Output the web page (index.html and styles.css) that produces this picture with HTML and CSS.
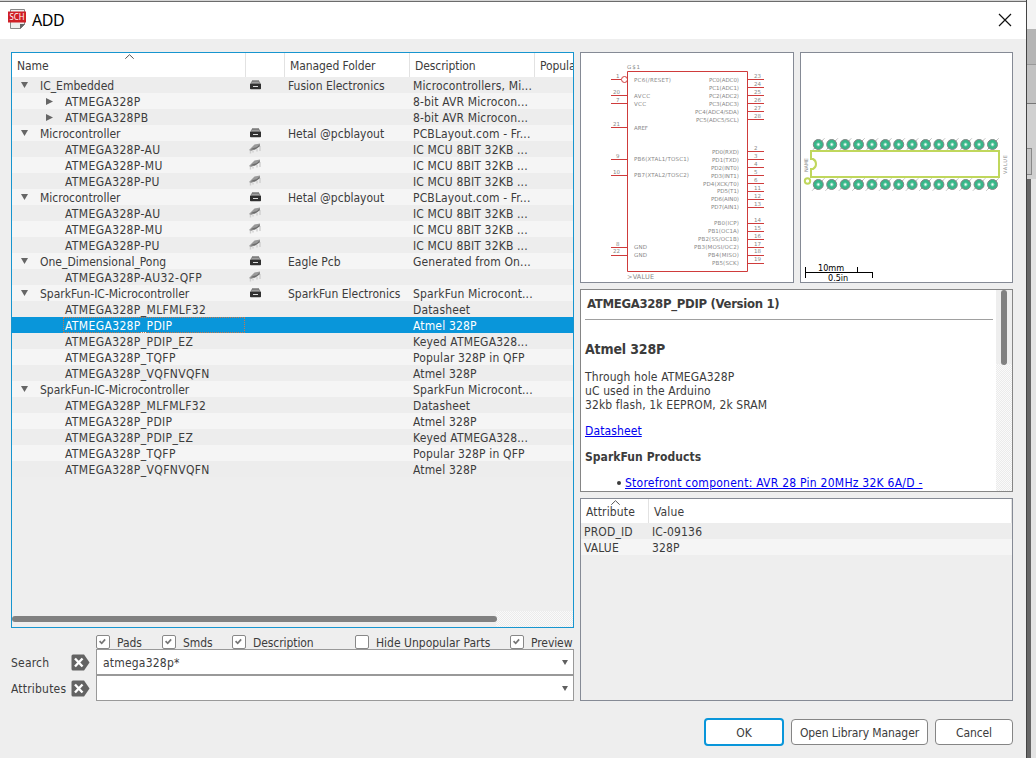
FILE: index.html
```html
<!DOCTYPE html>
<html lang="en">
<head>
<meta charset="utf-8">
<title>ADD</title>
<link rel="stylesheet" href="styles.css">
</head>
<body>
<svg class="defs" width="0" height="0">
  <symbol id="lib" viewBox="0 0 11 10"><path d="M2.500 0h6L11 4H0z" fill="#777"/><path d="M2.500 .7h6M1.500 2.500h8" stroke="#aaa" stroke-width=".8"/><path d="M0 4h11v4.500q0 .8-.8.8H.8Q0 9.300 0 8.500z" fill="#303030"/><path d="M3 6.500h5" stroke="#ddd"/></symbol>
  <symbol id="chip" viewBox="0 0 12 11"><path d="M1.500 7v3.500M4 8v1.500M8 5.500v3M11 3v5" stroke="#cfcfcf" stroke-width="1.400"/><path d="M0 7 5.500 1.500 11 .5 11 3 6 6.500 2 8z" fill="#9a9a9a"/><path d="M3 5.500 8 4 10.500 1.500v2L6 6.500H2z" fill="#6c6c6c"/></symbol>
  <symbol id="tick" viewBox="0 0 14 14"><path d="m3 6 2.500 2.500L9.500 4" fill="none" stroke="#777" stroke-width="2"/></symbol>
  <symbol id="clear" viewBox="0 0 19 17"><path d="M2 .5h11l5.500 8-5.500 8H2Q.5 16.500.5 15V2Q.5.5 2 .5z" fill="#636363"/><path d="m4 4.500 7.500 8M11.500 4.500 4 12.500" stroke="#fff" stroke-width="2.400"/></symbol>
  <symbol id="caret" viewBox="0 0 9 5"><path d="M.3 4.700 4.500.7l4.200 4" fill="none" stroke="#555"/></symbol>
  <g id="pad"><path d="M-6 6 6-6" stroke="#808080" stroke-width=".8" stroke-dasharray="1.500 .7"/><circle r="5" fill="#35b889" stroke="#858585"/><path d="M-4 4 4-4M-3.500-3.500l7 7" stroke="#5f9d86" stroke-width=".8" stroke-dasharray="1.300 1"/><circle r="1.900" fill="#7fd6b6"/><circle r=".9" fill="#fff"/></g>
</svg>
<div class="window">
  <header class="titlebar">
    <svg class="logo" width="18" height="21" viewBox="0 0 18 21"><path d="M2.500.5h14v15l-4 4h-10z" fill="#eee" stroke="#888"/><path d="M17 15h-5v5z" fill="#666"/><path d="M0 2.500h18v11H0z" fill="#cf2027"/><text x="1.500" y="11" textLength="15" lengthAdjust="spacingAndGlyphs" class="logo-text">SCH</text></svg>
    <h1>ADD</h1>
    <svg class="close" width="14" height="14" viewBox="0 0 14 14"><path d="m1 1 12 12M13 1 1 13" stroke="#111" stroke-width="1.200"/></svg>
  </header>
  <main class="content">
    <section class="left">
      <div class="tree">
        <div class="thead"><span>Name</span><span></span><span>Managed Folder</span><span>Description</span><span>Popula</span><svg class="sort"><use href="#caret"/></svg></div>
        <div class="row"><b class="p open">IC_Embedded</b><i><svg class="lib"><use href="#lib"/></svg></i><span>Fusion Electronics</span><span>Microcontrollers, Mi...</span></div>
        <div class="row"><b class="c shut">ATMEGA328P</b><i></i><span></span><span>8-bit AVR Microcon...</span></div>
        <div class="row"><b class="c shut">ATMEGA328PB</b><i></i><span></span><span>8-bit AVR Microcon...</span></div>
        <div class="row"><b class="p open">Microcontroller</b><i><svg class="lib"><use href="#lib"/></svg></i><span>Hetal @pcblayout</span><span>PCBLayout.com - Fr...</span></div>
        <div class="row"><b class="c">ATMEGA328P-AU</b><i><svg class="chip"><use href="#chip"/></svg></i><span></span><span>IC MCU 8BIT 32KB ...</span></div>
        <div class="row"><b class="c">ATMEGA328P-MU</b><i><svg class="chip"><use href="#chip"/></svg></i><span></span><span>IC MCU 8BIT 32KB ...</span></div>
        <div class="row"><b class="c">ATMEGA328P-PU</b><i><svg class="chip"><use href="#chip"/></svg></i><span></span><span>IC MCU 8BIT 32KB ...</span></div>
        <div class="row"><b class="p open">Microcontroller</b><i><svg class="lib"><use href="#lib"/></svg></i><span>Hetal @pcblayout</span><span>PCBLayout.com - Fr...</span></div>
        <div class="row"><b class="c">ATMEGA328P-AU</b><i><svg class="chip"><use href="#chip"/></svg></i><span></span><span>IC MCU 8BIT 32KB ...</span></div>
        <div class="row"><b class="c">ATMEGA328P-MU</b><i><svg class="chip"><use href="#chip"/></svg></i><span></span><span>IC MCU 8BIT 32KB ...</span></div>
        <div class="row"><b class="c">ATMEGA328P-PU</b><i><svg class="chip"><use href="#chip"/></svg></i><span></span><span>IC MCU 8BIT 32KB ...</span></div>
        <div class="row"><b class="p open">One_Dimensional_Pong</b><i><svg class="lib"><use href="#lib"/></svg></i><span>Eagle Pcb</span><span>Generated from On...</span></div>
        <div class="row"><b class="c">ATMEGA328P-AU32-QFP</b><i><svg class="chip"><use href="#chip"/></svg></i><span></span><span></span></div>
        <div class="row"><b class="p open">SparkFun-IC-Microcontroller</b><i><svg class="lib"><use href="#lib"/></svg></i><span>SparkFun Electronics</span><span>SparkFun Microcont...</span></div>
        <div class="row"><b class="c">ATMEGA328P_MLFMLF32</b><i></i><span></span><span>Datasheet</span></div>
        <div class="row selected"><b class="c">ATMEGA328P_PDIP</b><i></i><span></span><span>Atmel 328P</span></div>
        <div class="row"><b class="c">ATMEGA328P_PDIP_EZ</b><i></i><span></span><span>Keyed ATMEGA328...</span></div>
        <div class="row"><b class="c">ATMEGA328P_TQFP</b><i></i><span></span><span>Popular 328P in QFP</span></div>
        <div class="row"><b class="c">ATMEGA328P_VQFNVQFN</b><i></i><span></span><span>Atmel 328P</span></div>
        <div class="row"><b class="p open">SparkFun-IC-Microcontroller</b><i></i><span></span><span>SparkFun Microcont...</span></div>
        <div class="row"><b class="c">ATMEGA328P_MLFMLF32</b><i></i><span></span><span>Datasheet</span></div>
        <div class="row"><b class="c">ATMEGA328P_PDIP</b><i></i><span></span><span>Atmel 328P</span></div>
        <div class="row"><b class="c">ATMEGA328P_PDIP_EZ</b><i></i><span></span><span>Keyed ATMEGA328...</span></div>
        <div class="row"><b class="c">ATMEGA328P_TQFP</b><i></i><span></span><span>Popular 328P in QFP</span></div>
        <div class="row"><b class="c">ATMEGA328P_VQFNVQFN</b><i></i><span></span><span>Atmel 328P</span></div>
        <div class="hscroll"><div class="hthumb"></div></div>
      </div>
      <div class="checks">
        <label class="w66"><svg class="box"><use href="#tick"/></svg>Pads</label>
        <label class="w70"><svg class="box"><use href="#tick"/></svg>Smds</label>
        <label class="w123"><svg class="box"><use href="#tick"/></svg>Description</label>
        <label class="w155"><svg class="box"></svg>Hide Unpopular Parts</label>
        <label><svg class="box"><use href="#tick"/></svg>Preview</label>
      </div>
      <div class="field"><span>Search</span><svg class="clear"><use href="#clear"/></svg><div class="combo">atmega328p*</div></div>
      <div class="field"><span>Attributes</span><svg class="clear"><use href="#clear"/></svg><div class="combo"></div></div>
    </section>
    <section class="right">
      <div class="previews">
        <svg class="preview" viewBox="581 53 212 229">
          <g fill="none" stroke="#cf3b3b">
            <path d="M627.5 71.500h120v200h-120z"/>
            <path d="M748 79.500h16m-16 8h16m-16 8h16m-16 8h16m-16 8h16m-16 8h16M748 151.500h16m-16 8h16m-16 8h16m-16 8h16m-16 8h16m-16 8h16m-16 8h16m-16 8h16M748 223.500h16m-16 8h16m-16 8h16m-16 8h16m-16 8h16m-16 8h16"/>
            <path d="M611 79.500h10M611 95.500h16m-16 8h16m-16 24h16m-16 32h16m-16 16h16m-16 72h16m-16 8h16"/>
            <circle cx="624.5" cy="79.500" r="3"/>
          </g>
          <g class="pin">
            <text x="627" y="68.500" textLength="13">G$1</text>
            <text x="627" y="279" textLength="27" class="wide">&gt;VALUE</text>
            <text x="634" y="82" textLength="37">PC6(/RESET)</text>
            <text x="634" y="98" textLength="16">AVCC</text>
            <text x="634" y="106" textLength="12">VCC</text>
            <text x="634" y="130" textLength="14">AREF</text>
            <text x="634" y="161" textLength="55">PB6(XTAL1/TOSC1)</text>
            <text x="634" y="177" textLength="55">PB7(XTAL2/TOSC2)</text>
            <text x="634" y="249" textLength="13">GND</text>
            <text x="634" y="257" textLength="13">GND</text>
            <text x="709" y="82" textLength="30">PC0(ADC0)</text>
            <text x="709" y="90" textLength="30">PC1(ADC1)</text>
            <text x="709" y="98" textLength="30">PC2(ADC2)</text>
            <text x="709" y="106" textLength="30">PC3(ADC3)</text>
            <text x="695" y="114" textLength="44">PC4(ADC4/SDA)</text>
            <text x="696" y="122" textLength="43">PC5(ADC5/SCL)</text>
            <text x="712" y="154" textLength="27">PD0(RXD)</text>
            <text x="712" y="162" textLength="27">PD1(TXD)</text>
            <text x="711" y="170" textLength="28">PD2(INT0)</text>
            <text x="711" y="178" textLength="28">PD3(INT1)</text>
            <text x="703" y="186" textLength="36">PD4(XCK/T0)</text>
            <text x="717" y="193" textLength="22">PD5(T1)</text>
            <text x="711" y="201" textLength="28">PD6(AIN0)</text>
            <text x="711" y="209" textLength="28">PD7(AIN1)</text>
            <text x="714" y="225" textLength="25">PB0(ICP)</text>
            <text x="708" y="233" textLength="31">PB1(OC1A)</text>
            <text x="698" y="241" textLength="41">PB2(SS/OC1B)</text>
            <text x="694" y="249" textLength="45">PB3(MOSI/OC2)</text>
            <text x="708" y="257" textLength="31">PB4(MISO)</text>
            <text x="712" y="265" textLength="27">PB5(SCK)</text>
            <text x="754" y="78">23</text><text x="754" y="86">24</text><text x="754" y="94">25</text><text x="754" y="102">26</text><text x="754" y="110">27</text><text x="754" y="118">28</text>
            <text x="754" y="150">2</text><text x="754" y="158">3</text><text x="754" y="166">4</text><text x="754" y="174">5</text><text x="754" y="182">6</text><text x="754" y="190">11</text><text x="754" y="198">12</text><text x="754" y="206">13</text>
            <text x="754" y="222">14</text><text x="754" y="230">15</text><text x="754" y="238">16</text><text x="754" y="246">17</text><text x="754" y="253">18</text><text x="754" y="261">19</text>
            <text x="616" y="78">1</text><text x="613" y="94">20</text><text x="616" y="102">7</text><text x="613" y="126">21</text><text x="616" y="158">9</text><text x="613" y="174">10</text><text x="616" y="246">8</text><text x="613" y="253">22</text>
          </g>
        </svg>
        <svg class="preview" viewBox="801 53 211 229">
          <g id="pads" transform="translate(818.3 144.500)"><use href="#pad"/><use href="#pad" x="13.400"/><use href="#pad" x="26.800"/><use href="#pad" x="40.200"/><use href="#pad" x="53.600"/><use href="#pad" x="67"/><use href="#pad" x="80.400"/><use href="#pad" x="93.800"/><use href="#pad" x="107.200"/><use href="#pad" x="120.600"/><use href="#pad" x="134"/><use href="#pad" x="147.400"/><use href="#pad" x="160.800"/><use href="#pad" x="174.200"/></g>
          <use href="#pads" y="40"/>
          <g fill="none" stroke="#c0d75c" stroke-width="2"><path d="M811 159V151H999v26H811v-8h2q3-1.500 3-5t-3-5z"/><circle cx="807.500" cy="181" r="2.700"/></g>
          <path d="M811 160v8" stroke="#fff" stroke-width="2.200"/>
          <g class="pin small"><text transform="translate(808 172) rotate(-90)" textLength="14">NAME</text><text transform="translate(1006.500 174) rotate(-90)" textLength="19">VALUE</text></g>
          <path d="M805.500 267v11M805 272.500h68M857.500 267v5M872.500 272v6" stroke="#000" fill="none"/>
          <g class="scale"><text x="818" y="270.800">10mm</text><text x="828" y="281.300">0.5in</text></g>
        </svg>
      </div>
      <div class="details">
        <div class="doc">
          <h2>ATMEGA328P_PDIP (Version 1)</h2>
          <h3>Atmel 328P</h3>
          <p>Through hole ATMEGA328P<br>uC used in the Arduino<br>32kb flash, 1k EEPROM, 2k SRAM</p>
          <p><a>Datasheet</a></p>
          <h4>SparkFun Products</h4>
          <ul><li><a class="store">Storefront component: AVR 28 Pin 20MHz 32K 6A/D -</a></li></ul>
        </div>
        <div class="vscroll"><div class="vtrack"><div class="vthumb"></div></div></div>
      </div>
      <div class="attrs">
        <div class="ahead"><span>Attribute</span><span>Value</span><svg class="sort"><use href="#caret"/></svg></div>
        <div class="arow"><span>PROD_ID</span><span>IC-09136</span></div>
        <div class="arow alt"><span>VALUE</span><span>328P</span></div>
      </div>
    </section>
  </main>
  <footer class="buttons"><button class="ok">OK</button><button class="manager">Open Library Manager</button><button class="cancel">Cancel</button></footer>
</div>
<aside class="backdrop"><div class="b1"></div><div class="b2"></div><div class="b3"></div><div class="b4"><div></div></div><div class="b5"></div></aside>
</body>
</html>
```
FILE: styles.css
```css
* { box-sizing: border-box; }
body { margin: 0; width: 1036px; height: 758px; overflow: hidden; display: flex; background: #e4e4e4; color: #3c3c3c; font: 12px/16px "DejaVu Sans Condensed", "DejaVu Sans", sans-serif; font-stretch: condensed; letter-spacing: -0.08px; }
svg { display: block; }
.defs { position: absolute; }
.window { width: 1026px; height: 758px; background: #eee; border-top: 1px solid #d5d5d5; flex: none; }
.titlebar { height: 38px; border-top: 1px solid #6c6c6c; background: #fff; display: flex; align-items: center; padding: 0 14px 2px 8px; }
.titlebar h1 { margin: 1px auto 0 6px; color: #000; font: 16px/20px "Noto Sans", sans-serif; letter-spacing: -0.5px; }
.logo-text { font: 9px "Noto Sans", sans-serif; fill: #fff; letter-spacing: 0; }
.content { display: flex; gap: 6px; padding: 13px 0 0 11px; }
.left { width: 563px; }
.tree { height: 576px; border: 1px solid #1795cf; position: relative; overflow: hidden; display: flex; flex-direction: column; }
.thead, .row { display: grid; grid-template-columns: 234px 39px 125px 125px 39px; flex: none; white-space: nowrap; }
.thead { height: 24px; background: #fff; line-height: 26px; }
.thead span { padding-left: 5px; border-right: 1px solid #e2e2e2; overflow: hidden; }
.thead span:nth-child(5) { border: 0; }
.sort { position: absolute; left: 113px; top: 1px; width: 9px; height: 5px; }
.row { height: 16px; line-height: 18px; background: #ededed; }
.row:nth-child(odd) { background: #f5f5f5; }
.row b { font-weight: 400; position: relative; height: 16px; }
.row i { padding: 3px 0 0 3px; height: 16px; }
.row span { padding-left: 3px; height: 16px; letter-spacing: 0; }
.row span:last-child { letter-spacing: 0.15px; }
.row .p { padding-left: 28px; letter-spacing: 0; }
.row .c { padding-left: 53px; letter-spacing: 0.37px; }
.open::before, .shut::before { content: ""; position: absolute; background: #666; }
.open::before { left: 9px; top: 5px; width: 7px; height: 6px; clip-path: polygon(0 0, 100% 0, 50% 100%); }
.shut::before { left: 34px; top: 5px; width: 7px; height: 7px; clip-path: polygon(0 0, 100% 50%, 0 100%); }
.row .lib { width: 11px; height: 10px; margin-left: 1px; }
.row .chip { width: 12px; height: 11px; margin-top: -1px; }
.row.selected { background: #0996da; color: #fff; }
.selected b::after { content: ""; position: absolute; inset: 0 1px 0 51px; border: 1px dotted #c8784c; }
.hscroll { margin-top: auto; height: 16px; padding-top: 5px; background: linear-gradient(90deg, #eee 484px, transparent 484px), repeating-conic-gradient(#ebebeb 0 25%, #fafafa 0 50%) 0 0 / 2px 2px; }
.hthumb { width: 485px; height: 6px; border-radius: 3px; background: #808080; }
.checks { height: 21px; padding: 7px 0 0 85px; display: flex; white-space: nowrap; }
.checks label { display: flex; gap: 7px; height: 14px; line-height: 17px; }
.box { width: 14px; height: 14px; border: 1px solid #888; border-radius: 2px; background: #fff; flex: none; }
.w66 { width: 66px; } .w70 { width: 70px; } .w123 { width: 123px; } .w155 { width: 155px; letter-spacing: 0; }
.field { height: 26px; display: flex; align-items: center; letter-spacing: 0.2px; }
.field > span { width: 60px; padding-top: 1px; }
.clear { width: 19px; height: 17px; margin-right: 6px; }
.combo { width: 478px; height: 26px; border: 1px solid #999; background: #fff; padding: 1px 5px 0 6px; display: flex; align-items: center; }
.combo::after { content: ""; width: 6px; height: 5px; margin-left: auto; background: #606060; clip-path: polygon(0 0, 100% 0, 50% 100%); }
.right { width: 433px; display: flex; flex-direction: column; gap: 6px; }
.previews { display: flex; justify-content: space-between; }
.preview { width: 213px; height: 231px; border: 1px solid #858a95; background: #fff; }
.preview:first-child { width: 214px; }
.pin { font: 5.500px "DejaVu Sans", sans-serif; fill: #888; letter-spacing: 0; }
.pin .wide { font-size: 6.500px; }
.pin.small { font-size: 5px; }
.scale { font: 9px "DejaVu Sans", sans-serif; font-stretch: condensed; fill: #000; letter-spacing: 0; }
.details { height: 203px; border: 1px solid #858585; background: #fff; display: flex; justify-content: space-between; overflow: hidden; }
.doc { padding: 5px 0 0 4px; width: 412px; line-height: 14px; letter-spacing: 0.11px; }
.doc h2 { margin: 0 0 20px; padding: 0 0 7px 2px; border-bottom: 1px solid #a0a0a0; font-size: 13px; line-height: 17px; letter-spacing: -0.31px; }
.doc h3 { margin: 0 0 12px; font-size: 14px; line-height: 18px; letter-spacing: -0.15px; }
.doc p { margin: 0 0 12px; }
.doc h4 { margin: 0 0 12px; font-size: 12px; line-height: 14px; letter-spacing: 0.05px; }
.doc a { color: #0000f0; text-decoration: underline; }
.doc .store { letter-spacing: 0.25px; }
.doc ul { margin: 0; padding-left: 40px; list-style: none; }
.doc li { position: relative; white-space: nowrap; }
.doc li::before { content: ""; position: absolute; left: -8px; top: 5px; width: 4px; height: 4px; border-radius: 50%; background: #3c3c3c; }
.vscroll { width: 16px; background: repeating-conic-gradient(#ebebeb 0 25%, #fafafa 0 50%) 0 0 / 2px 2px; }
.vtrack { height: 74px; background: #eee; }
.vthumb { width: 6px; height: 75px; margin-left: 5px; border-radius: 3px; background: #808080; }
.attrs { height: 203px; border: 1px solid #858a95; position: relative; letter-spacing: 0.15px; }
.ahead, .arow { display: grid; grid-template-columns: 68px 1fr; }
.ahead { height: 24px; line-height: 26px; background: #fff; }
.ahead span { padding-left: 5px; border-right: 1px solid #e2e2e2; height: 24px; }
.ahead .sort { left: 30px; }
.arow { height: 16px; line-height: 18px; background: #ededed; }
.arow span { padding-left: 3px; height: 16px; }
.arow.alt { background: #f5f5f5; }
.buttons { display: flex; justify-content: flex-end; align-items: center; gap: 7px; padding: 17px 13px 0 0; }
button { height: 26px; padding: 2px 0 0; border: 1px solid #858585; border-radius: 4px; background: #fff; color: inherit; font: inherit; letter-spacing: inherit; }
.ok { width: 80px; height: 28px; border: 2px solid #0996da; }
.manager { width: 137px; }
.cancel { width: 78px; }
.backdrop { width: 10px; height: 758px; border-left: 1px solid #444; display: flex; flex-direction: column; background: #e4e4e4; }
.b1 { height: 29px; background: #f3f3f3; }
.b2 { height: 36px; background: #b5b5b5; border-bottom: 1px solid #999; }
.b3 { height: 39px; background: #c2c2c2; border-bottom: 1px solid #777; }
.b4 { height: 75px; background: #d0d0d0; padding-top: 44px; }
.b4 div { height: 27px; width: 5px; border: 1px solid #888; border-left: 0; background: #c4c4c4; }
.b5 { flex: 1; width: 4px; background: #666; }
```
